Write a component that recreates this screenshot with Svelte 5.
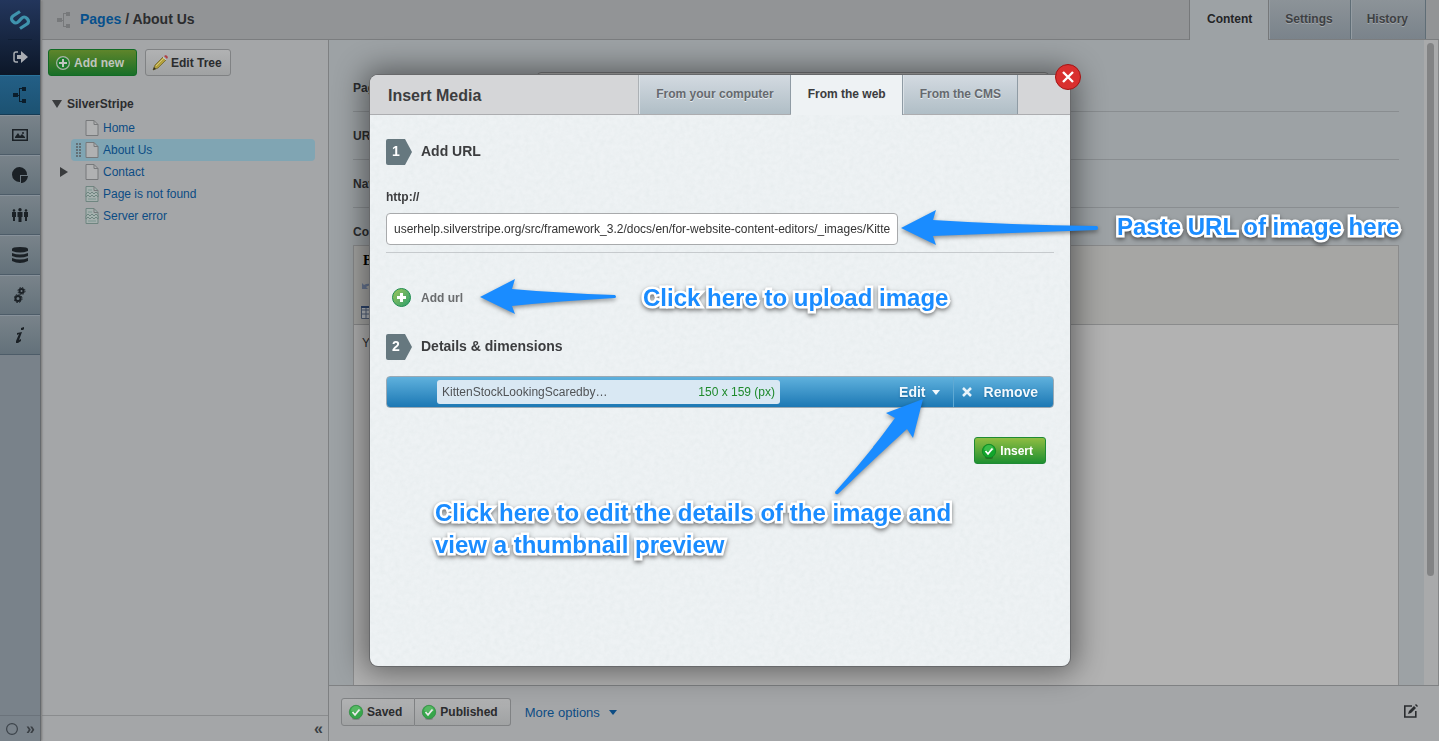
<script>
  const sections = ['pages', 'files', 'reports', 'security', 'archive', 'settings', 'help'];
  const tree = [
    { name: 'Home', icon: 'page' },
    { name: 'About Us', icon: 'page', current: true },
    { name: 'Contact', icon: 'page', closed: true },
    { name: 'Page is not found', icon: 'broken' },
    { name: 'Server error', icon: 'broken' }
  ];
  const pageTabs = ['Content', 'Settings', 'History'];
  const mediaTabs = ['From your computer', 'From the web', 'From the CMS'];
  let url = $state(
    'userhelp.silverstripe.org/src/framework_3.2/docs/en/for-website-content-editors/_images/Kitte'
  );
  let pageName = $state('');
</script>

{#snippet sitemap(size)}
  <svg width={size} height={size} viewBox="0 0 16 16" aria-hidden="true">
    <g fill="currentColor">
      <rect x="1" y="6" width="5" height="4" />
      <rect x="10" y="0" width="4" height="4" />
      <rect x="10" y="12" width="4" height="4" />
      <rect x="7" y="1" width="1" height="14" />
      <rect x="6" y="8" width="2" height="1" />
      <rect x="7" y="1" width="3" height="1" />
      <rect x="7" y="14" width="3" height="1" />
    </g>
  </svg>
{/snippet}

{#snippet check(dim)}
  <svg class:dim width="16" height="16" viewBox="0 0 16 16" aria-hidden="true">
    <ellipse cx="8" cy="14.500" rx="4" ry="1.500" fill="#000" opacity=".25" />
    <circle cx="8" cy="8" r="6.700" fill="#12a52c" stroke="#0c8423" stroke-width=".8" />
    <path d="M3 7a5 5 0 0 1 10 0q-5 2-10 0" fill="#5fd465" opacity=".5" />
    <path d="M4.500 8l2.500 2.800 4.500-5.300" fill="none" stroke="#fff" stroke-width="1.800" />
  </svg>
{/snippet}

{#snippet step(n)}
  <span class="step">
    <svg width="26" height="26" viewBox="0 0 26 26" aria-hidden="true">
      <path d="M2 0h17l7 13-7 13H2q-2 0-2-2V2q0-2 2-2z" fill="#66787f" />
    </svg>
    <em>{n}</em>
  </span>
{/snippet}

<div class="cms">
  <nav class="menu" aria-label="CMS sections">
    <div class="brand">
      <a class="logo" href="#home" aria-label="SilverStripe">
        <svg width="22" height="20" viewBox="0 0 22 20" aria-hidden="true">
          <path
            d="M11 1.500L4 6Q1 8.500 4 11.500Q7 14.500 9.500 11.500L12.500 8.500Q15 5.500 18 8.500Q21 11.500 18 14L11 18.500"
            fill="none" stroke="#3f93ad" stroke-width="3.200"
          />
        </svg>
      </a>
      <a class="logout" href="#logout" aria-label="Log out">
        <svg width="15" height="13" viewBox="0 0 15 13" aria-hidden="true">
          <path d="M5 1H3Q1 1 1 3v6q0 2 2 2h2" fill="none" stroke="#a9adb3" stroke-width="1.500" />
          <path d="M4 4h4V0l7 6-7 6V8H4z" fill="#a9adb3" />
        </svg>
      </a>
    </div>
    {#each sections as s, i}
      <a class="section" class:active={i === 0} href={'#' + s} aria-label={s}>
        {#if s === 'pages'}
          {@render sitemap(16)}
        {:else if s === 'files'}
          <svg width="16" height="12" viewBox="0 0 16 12" fill="currentColor" aria-hidden="true">
            <path d="M0 0h16v12H0zM1.500 1.500v9h13v-9z" fill-rule="evenodd" />
            <path d="M3 9V8l3-4 2 3 2-2 3 3v1z" /><circle cx="11" cy="4" r="1" />
          </svg>
        {:else if s === 'reports'}
          <svg width="16" height="16" viewBox="0 0 16 16" fill="currentColor" aria-hidden="true">
            <path d="M8 8h7A7.500 7.500 0 1 0 8 15z" /><path d="M9 9h7q-1 6-6 7H9z" />
          </svg>
        {:else if s === 'security'}
          <svg width="16" height="14" viewBox="0 0 16 14" fill="currentColor" aria-hidden="true">
            <circle cx="2" cy="2.500" r="1.300" /><circle cx="14" cy="2.500" r="1.300" /><circle cx="8" cy="1.700" r="1.700" />
            <path d="M0 4h4v5H3v4H1V9H0zM12 4h4v5h-1v4h-2V9h-1zM5.500 4h5v5h-1v5h-3V9h-1z" />
          </svg>
        {:else if s === 'archive'}
          <svg width="16" height="16" viewBox="0 0 16 16" fill="currentColor" aria-hidden="true">
            <path d="M0 2q0-2 8-2t8 2v2q-8 3-16 0z" />
            <path d="M0 6q8 3 16 0v3q-8 3-16 0zM0 11q8 3 16 0v3q-8 4-16 0z" />
          </svg>
        {:else if s === 'settings'}
          <svg width="12" height="16" viewBox="0 0 12 16" fill="none" stroke="currentColor" aria-hidden="true">
            <circle cx="7.500" cy="4" r="2" stroke-width="2" /><circle cx="7.500" cy="4" r="3.500" stroke-dasharray="1.500 1.250" />
            <circle cx="4" cy="11.500" r="2.500" stroke-width="2" /><circle cx="4" cy="11.500" r="4" stroke-dasharray="1.800 1.350" />
          </svg>
        {:else}
          <svg width="10" height="16" viewBox="0 0 10 16" fill="currentColor" aria-hidden="true">
            <path d="M6 1l3-1v2l-1 1H6zM2 6l5-1-3 8 2-1v2l-3 2H1v-2l3-7-2 1z" />
          </svg>
        {/if}
      </a>
    {/each}
    <div class="menu-foot">
      <svg width="12" height="12" viewBox="0 0 12 12" aria-hidden="true"><circle cx="6" cy="6" r="5.400" fill="none" stroke="#3c434a" stroke-width="1.200" /></svg>
      <button class="plain" aria-label="Expand menu">»</button>
    </div>
  </nav>

  <div class="main">
    <header class="top">
      <span class="crumb-icon">{@render sitemap(16)}</span>
      <h1><a href="#pages">Pages</a> / About Us</h1>
      <div class="tabs page-tabs" role="tablist">
        {#each pageTabs as t, i}
          <button role="tab" aria-selected={i === 0} class:on={i === 0}>{t}</button>
        {/each}
      </div>
    </header>

    <div class="work">
      <aside class="tree-panel">
        <div class="tools">
          <button class="btn add">
            <svg width="16" height="16" viewBox="0 0 16 16" aria-hidden="true">
              <circle cx="8" cy="8" r="6.400" fill="#1b7c2a" stroke="#a9b5a7" stroke-width="1.200" />
              <path d="M8 4v8M4 8h8" stroke="#c0c5bf" stroke-width="2" />
            </svg>Add new</button>
          <button class="btn">
            <svg width="16" height="18" viewBox="0 0 16 18" aria-hidden="true">
              <path d="M1 16L3 11L11 3L14 6L6 14z" fill="#b3a03c" stroke="#6e6430" stroke-width=".8" />
              <path d="M12 2l2-1 2 2-1 2z" fill="#ae4046" /><path d="M11 3l3 3" stroke="#c2c5c8" />
              <path d="M1 16l1-3 2 2z" fill="#302c20" /><path d="M4 12l8-8" stroke="#d2c678" />
            </svg>Edit Tree</button>
        </div>
        <div class="root"><i class="tri down"></i>SilverStripe</div>
        <ul>
          {#each tree as n}
            <li class:current={n.current}>
              <span class="handle">
                {#if n.closed}<i class="tri right"></i>{/if}
                {#if n.current}
                  <svg width="6" height="14" viewBox="0 0 6 14" aria-hidden="true">
                    <path d="M1 0v14M4 0v14" stroke="#5d6468" stroke-width="1.600" stroke-dasharray="2 1" />
                  </svg>
                {/if}
              </span>
              <svg width="14" height="16" viewBox="0 0 14 16" aria-hidden="true">
                <path d="M1 .5h8l4 4v11H1z" fill={n.icon === 'page' ? '#b0b1b2' : '#a5b0ae'} stroke={n.icon === 'page' ? '#77797b' : '#6f8580'} />
                <path d="M9 .5v4h4" fill="none" stroke="#77797b" />
                {#if n.icon === 'broken'}
                  <path d="M1 8l2-2 2 2 2-2 2 2 2-2 2 2v3l-2-2-2 2-2-2-2 2-2-2-2 2z" fill="#a6b3b0" stroke="#6f8580" />
                  <path d="M3 4h4M3 13h8" stroke="#7c9690" />
                {/if}
              </svg>
              <a href={'#' + n.name}>{n.name}</a>
            </li>
          {/each}
        </ul>
        <div class="tree-foot"><button class="plain" aria-label="Collapse panel">«</button></div>
      </aside>

      <section class="edit">
        <div class="scroll">
          <form class="fields">
            <div class="row"><label for="pn">Page</label><input id="pn" class="name" bind:value={pageName} /></div>
            <div class="row"><span>URL</span></div>
            <div class="row"><span>Nav</span></div>
            <div class="row last"><span>Content</span></div>
            <div class="editor">
              <div class="editor-tools">
                <b>B</b>
                <svg width="14" height="12" viewBox="0 0 14 12" aria-hidden="true"><path d="M1 2v6h6L5 6q4-4 8 2Q10 0 3 4z" fill="#697894" /></svg>
                <svg width="14" height="14" viewBox="0 0 14 14" aria-hidden="true">
                  <path d="M.5 1.500h13v12H.5zM1 5h12M1 9h12M5 2v11M9 2v11" fill="#b4b8bd" stroke="#526078" /><path d="M0 1h14v2H0z" fill="#2d456d" />
                </svg>
              </div>
              <p>You</p>
            </div>
          </form>
          <div class="bar"><i></i></div>
        </div>
        <footer>
          <div class="group">
            <button class="btn">{@render check(true)}Saved</button>
            <button class="btn">{@render check(true)}Published</button>
          </div>
          <a class="more" href="#more">More options <i class="tri small"></i></a>
          <button class="plain compose" aria-label="Edit mode">
            <svg width="15" height="15" viewBox="0 0 15 15" aria-hidden="true">
              <path d="M9 2H1.800v11h11V7" fill="none" stroke="#2a2c2f" stroke-width="1.600" />
              <path d="M5 10l1-3 5-5 2 2-5 5zM12 1l1-1 2 2-1 1z" fill="#2a2c2f" />
            </svg>
          </button>
        </footer>
      </section>
    </div>
  </div>
</div>

<div class="overlay">
  <div class="dialog" role="dialog" aria-labelledby="dlg-title">
    <svg class="paper" aria-hidden="true">
      <filter id="grain">
        <feTurbulence type="fractalNoise" baseFrequency=".2" numOctaves="3" />
        <feColorMatrix values="0 0 0 0 .4 0 0 0 0 .5 0 0 0 0 .5 .5 .4 0 0 -.32" />
      </filter>
      <rect width="100%" height="100%" filter="url(#grain)" />
    </svg>
    <div class="dlg-head">
      <h2 id="dlg-title">Insert Media</h2>
      <div class="tabs" role="tablist">
        {#each mediaTabs as t, i}
          <button role="tab" aria-selected={i === 1} class:on={i === 1}>{t}</button>
        {/each}
      </div>
    </div>
    <div class="dlg-body">
      <h3>{@render step(1)}Add URL</h3>
      <div class="url">
        <label for="url">http://</label>
        <input id="url" bind:value={url} />
      </div>
      <button class="add-url">
        <svg width="20" height="20" viewBox="0 0 20 20" aria-hidden="true">
          <defs><linearGradient id="g" x2="1" y2="1"><stop offset="0" stop-color="#9fc65a" /><stop offset="1" stop-color="#2c9f6c" /></linearGradient></defs>
          <circle cx="9.500" cy="9.500" r="9" fill="url(#g)" stroke="#1f8c50" stroke-width="1" />
          <path d="M9.500 5v9M5 9.500h9" stroke="#fff" stroke-width="3" />
        </svg>Add url</button>
      <h3>{@render step(2)}Details &amp; dimensions</h3>
      <div class="file">
        <div class="info"><span>KittenStockLookingScaredby…</span><span class="dims">150 x 159 (px)</span></div>
        <button class="edit-file">Edit <i class="tri small"></i></button>
        <button class="remove"><svg width="10" height="10" viewBox="0 0 10 10" aria-hidden="true"><path d="M1 1l8 8M9 1l-8 8" stroke="#e8f3fa" stroke-width="2.500" /></svg>Remove</button>
      </div>
      <div class="actions"><button class="btn insert">{@render check(false)}Insert</button></div>
    </div>
    <button class="close" aria-label="Close">
      <svg width="12" height="12" viewBox="0 0 12 12" aria-hidden="true"><path d="M1 1l10 10M11 1L1 11" stroke="#fff" stroke-width="2.400" /></svg>
    </button>

    <svg class="arrows" width="740" height="440" viewBox="0 0 740 440" aria-hidden="true">
      <g fill="#1a8cff">
        <path d="M531 153L566 135L563 145Q640 150 727 151Q729 153 727 155Q640 158 563 161L566 170z" />
        <path d="M110 222L145 204L142 214Q190 218 245 220Q247 222 245 223Q190 226 142 231L145 239z" />
        <path d="M553 324L516 338L525 343Q500 378 465 417Q465 420 468 419Q502 386 537 354L543 363z" />
      </g>
    </svg>
    <p class="note paste">Paste URL of image here</p>
    <p class="note upload">Click here to upload image</p>
    <p class="note details">Click here to edit the details of the image and view a thumbnail preview</p>
  </div>
</div>

<style>
  :global(body) { font-family: "Liberation Sans", Arial, sans-serif; font-size: 12px; color: #2b2c2e; overflow: hidden; }
  button, input { font: inherit; color: inherit; }
  button { padding: 0; border: 0; background: none; white-space: nowrap; }
  a { color: #0c4c84; text-decoration: none; }
  svg { display: block; flex: none; }
  h1, h2, h3, p, ul { margin: 0; padding: 0; }
  .cms { display: flex; height: 100vh; background: #a4a6a8; }
  .menu { display: flex; flex-direction: column; width: 40px; background: #79828a; border-right: 1px solid #65696d; box-shadow: 1px 0 2px #777; z-index: 1; color: #1b2126; }
  .brand { background: linear-gradient(#23365c, #0c1728); height: 75px; display: flex; flex-direction: column; }
  .logo, .logout { display: grid; place-items: center; }
  .logo { height: 39px; border-bottom: 1px solid #101e35; margin: 0 8px; }
  .logout { height: 35px; }
  .section { box-sizing: border-box; height: 40px; display: grid; place-items: center; color: inherit; background: linear-gradient(#79838a, #63717a); border-top: 1px solid #87919a; border-bottom: 1px solid #4d5c68; }
  .section.active { background: linear-gradient(#235f86, #1c5272); border-top-color: #2a739b; border-bottom-color: #153b54; color: #0b1d2b; }
  .menu-foot { margin-top: auto; height: 25px; border-top: 1px solid #6b737b; display: flex; align-items: center; gap: 8px; padding-left: 6px; }
  .plain { font-size: 16px; font-weight: bold; line-height: 20px; color: #3a3f44; }
  .main { flex: 1; min-width: 0; display: flex; flex-direction: column; margin-left: 1px; }
  .top { height: 39px; display: flex; align-items: center; background: #929496; border-bottom: 1px solid #7b7d7f; }
  .crumb-icon { color: #77797b; padding: 0 8px 0 14px; }
  h1 { font-size: 14px; line-height: 16px; padding-bottom: 1px; }
  h1 a { color: #07508c; }
  .tabs { display: flex; align-self: stretch; font-weight: bold; }
  .page-tabs { margin-left: auto; margin-right: 13px; }
  .page-tabs button { padding: 0 17px 2px 16px; border-right: 1px solid #5f6d76; color: #3d4043; background: linear-gradient(#8c9398, #7a838b); box-shadow: inset 1px 0 #959da3; text-shadow: 0 1px 0 #a3a7aa; }
  .page-tabs button.on { background: #9da2a5; box-shadow: none; color: #232426; border-left: 1px solid #76787a; border-right-color: #76787a; margin-bottom: -1px; padding: 0 16px 3px 17px; }
  .work { flex: 1; min-height: 0; display: flex; }
  .tree-panel { width: 286px; border-right: 1px solid #7e8082; display: flex; flex-direction: column; }
  .tools { display: flex; gap: 8px; padding: 9px 6px 0; }
  .btn { box-sizing: border-box; height: 27px; display: flex; align-items: center; gap: 3px; padding: 0 8px 0 6px; border: 1px solid #808284; border-radius: 3px; background: linear-gradient(#b1b2b3, #a0a2a3); font-weight: bold; }
  .btn.add { border-color: #126a25; background: linear-gradient(#5f852b, #186f28); color: #bfc5bd; padding-right: 12px; }
  .root { font-weight: bold; display: flex; align-items: center; gap: 5px; padding: 18px 0 3px 10px; height: 20px; }
  .tri { display: block; width: 0; height: 0; border: 5px solid transparent; }
  .tri.down { border-top: 8px solid #393b3d; border-bottom: 0; }
  .tri.right { border-left: 8px solid #393b3d; border-right: 0; }
  .tri.small { border-width: 4px; border-top: 5px solid; border-bottom: 0; }
  ul { list-style: none; margin-right: 13px; }
  li { display: flex; align-items: center; height: 22px; gap: 4px; padding-left: 18px; }
  li.current { background: #80a5b3; margin-left: 29px; padding-left: 5px; border-radius: 4px; }
  .handle { width: 21px; }
  li.current .handle { width: 5px; }
  .tree-foot { margin-top: auto; height: 25px; border-top: 1px solid #8a8c8e; display: flex; justify-content: flex-end; align-items: center; padding-right: 5px; }
  .edit { flex: 1; min-width: 0; display: flex; flex-direction: column; background: #9da2a5; }
  .scroll { flex: 1; min-height: 0; display: flex; overflow: hidden; }
  .fields { flex: 1; display: flex; flex-direction: column; padding: 24px 25px 0 24px; font-weight: bold; }
  .row { box-sizing: border-box; height: 48px; display: grid; grid-template-columns: 184px 512px; align-items: center; border-bottom: 1px solid #898d90; }
  .row.last { height: 37px; border: 0; padding-top: 10px; }
  .name { box-sizing: border-box; height: 32px; border: 1px solid #77797b; border-radius: 4px; background: #b2b2b2; font-weight: normal; }
  .editor { flex: 1; border: 1px solid #8a8b8c; border-bottom: 0; background: #b2b2b2; font-weight: normal; }
  .editor-tools { box-sizing: border-box; height: 79px; padding: 6px 7px; display: flex; flex-direction: column; gap: 12px; background: #a6a6a4; border-bottom: 1px solid #8a8b8c; }
  .editor-tools b { font: bold 14px/17px "Liberation Serif", serif; color: #000; padding-left: 2px; }
  .editor p { padding: 11px 8px; }
  .bar { box-sizing: border-box; width: 15px; padding: 3px 4px 0 3px; background: #a9aaab; border-right: 1px solid #858788; }
  .bar i { display: block; height: 83%; border-radius: 4px; background: #828384; }
  footer { box-sizing: border-box; height: 56px; display: flex; align-items: flex-start; padding: 12px 21px 0 12px; border-top: 1px solid #7f8183; background: #a4a6a8; }
  .group { display: flex; }
  .group .btn { height: 28px; padding-right: 12px; }
  .group .btn:first-child { border-radius: 3px 0 0 3px; }
  .group .btn:last-child { border-radius: 0 3px 3px 0; border-left: 0; }
  .more { display: flex; align-items: center; gap: 9px; height: 28px; padding-left: 14px; font-size: 13px; }
  .compose { margin-left: auto; padding-top: 6px; }
  .dim { opacity: .75; }

  .overlay { position: fixed; inset: 0; display: flex; justify-content: center; padding: 75px 0 75px 1px; }
  .dialog { position: relative; width: 700px; display: flex; flex-direction: column; border-radius: 8px; background: #eef2f4; color: #3c3d3f; box-shadow: 0 0 0 1px #68696b, 0 0 30px 6px rgba(0, 0, 0, .45); }
  .paper { position: absolute; inset: 0; width: 100%; height: 100%; border-radius: 8px; opacity: .22; }
  .dlg-head { position: relative; height: 39px; display: flex; align-items: center; border-bottom: 1px solid #acadb0; border-radius: 8px 8px 0 0; background: #d5d6d8; }
  h2 { flex: 1; font-size: 16px; line-height: 18px; padding: 2px 0 0 18px; }
  .dlg-head .tabs { border-left: 1px solid #acb1b5; margin-right: 52px; }
  .dlg-head .tabs button { border-right: 1px solid #8f9ba4; color: #65696e; text-shadow: 0 1px 0 #e8ecef; background: linear-gradient(#d3dae1, #b0bec6); box-shadow: inset 1px 0 #dbe2e7; padding: 0 16px 2px 17px; }
  .dlg-head .tabs button.on { background: #eef2f4; color: #3b3c3e; box-shadow: none; margin-bottom: -1px; padding-bottom: 3px; }
  .dlg-body { position: relative; display: flex; flex-direction: column; padding: 24px 16px; }
  h3 { font-size: 14px; line-height: 24px; display: flex; gap: 9px; }
  .step { display: grid; }
  .step > * { grid-area: 1 / 1; }
  .step em { font-style: normal; color: #fff; padding-left: 6px; }
  .url { display: flex; flex-direction: column; align-items: flex-start; gap: 8px; padding: 24px 0 7px; border-bottom: 1px solid #c6cacd; font-weight: bold; }
  .url label { line-height: 16px; }
  .url input { box-sizing: border-box; width: 512px; height: 32px; padding: 0 7px 1px; border: 1px solid #a8aaac; border-radius: 4px; background: #fff; font-weight: normal; color: #333; }
  .add-url { display: flex; align-items: center; gap: 9px; align-self: flex-start; padding: 35px 6px 26px; font-weight: bold; color: #6a6c6e; }
  .file { box-sizing: border-box; display: flex; align-items: stretch; height: 32px; margin-top: 16px; padding-left: 50px; border: 1px solid #9aa9b4; border-radius: 4px; background: linear-gradient(#5fb1dd, #1c78b4); }
  .info { box-sizing: border-box; width: 343px; margin: 3px 0; display: flex; justify-content: space-between; align-items: center; padding: 0 5px; border-radius: 3px; background: #d9e8f3; color: #505356; }
  .dims { color: #1f8a2c; }
  .file button { font-size: 14px; font-weight: bold; color: #f2f9fd; text-shadow: 0 1px 2px #17649a; display: flex; align-items: center; }
  .edit-file { margin-left: auto; gap: 6px; }
  .file .edit-file { padding-right: 13px; }
  .file .remove { padding: 0 15px 0 8px; gap: 12px; border-left: 1px solid #5fa9d3; }
  .actions { display: flex; justify-content: flex-end; padding: 29px 8px 0; }
  .insert { color: #fff; border-color: #1f8a34; background: linear-gradient(#8fbd42, #1f9030); padding: 0 12px 0 6px; }
  .close { position: absolute; top: -11px; right: -11px; width: 26px; height: 26px; display: grid; place-items: center; border-radius: 50%; border: 1px solid #a31313; background: #d9302f; }
  .arrows { position: absolute; left: 0; top: 0; overflow: visible; pointer-events: none; filter: drop-shadow(0 2px 2px rgba(0, 0, 0, .4)); }
  .note { position: absolute; font-size: 24px; line-height: 32px; font-weight: bold; color: #1a8cff; white-space: nowrap; -webkit-text-stroke: 5px #fff; paint-order: stroke fill; stroke-linejoin: round; filter: drop-shadow(0 2px 2px rgba(0, 0, 0, .5)); }
  .paste { left: 747px; top: 136px; }
  .upload { left: 273px; top: 207px; }
  .details { left: 65px; top: 422px; width: 530px; white-space: normal; }
</style>
